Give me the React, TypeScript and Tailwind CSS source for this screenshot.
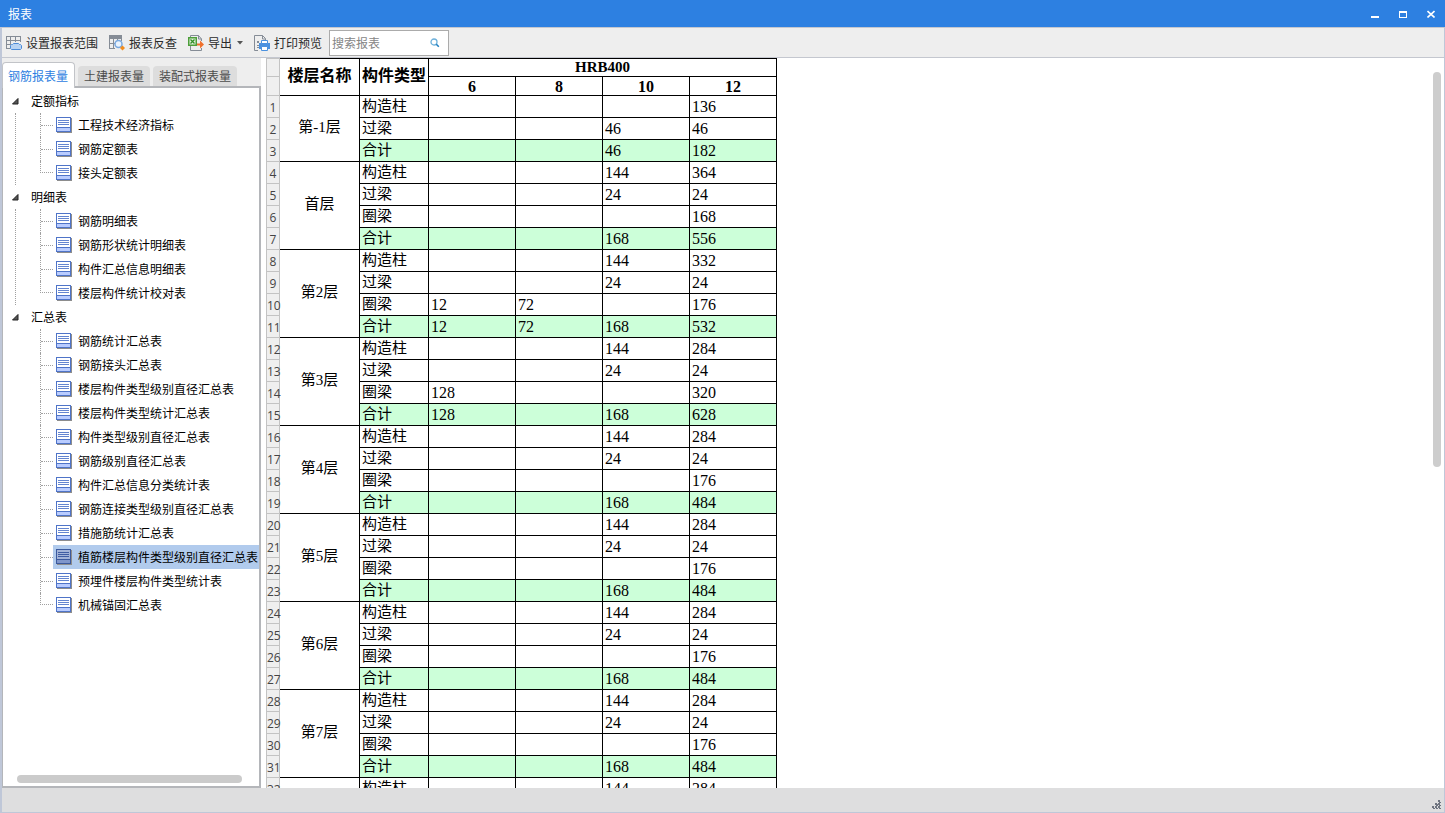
import type { ReactNode } from "react";

type Item = { label: string; selected?: boolean };
type Section = { title: string; items: Item[] };
type Row = { type: string; values: string[] };
type Floor = { name: string; rows: Row[] };

const tabs = ["钢筋报表量", "土建报表量", "装配式报表量"];

const sections: Section[] = [
  {
    title: "定额指标",
    items: [{ label: "工程技术经济指标" }, { label: "钢筋定额表" }, { label: "接头定额表" }],
  },
  {
    title: "明细表",
    items: [
      { label: "钢筋明细表" },
      { label: "钢筋形状统计明细表" },
      { label: "构件汇总信息明细表" },
      { label: "楼层构件统计校对表" },
    ],
  },
  {
    title: "汇总表",
    items: [
      { label: "钢筋统计汇总表" },
      { label: "钢筋接头汇总表" },
      { label: "楼层构件类型级别直径汇总表" },
      { label: "楼层构件类型统计汇总表" },
      { label: "构件类型级别直径汇总表" },
      { label: "钢筋级别直径汇总表" },
      { label: "构件汇总信息分类统计表" },
      { label: "钢筋连接类型级别直径汇总表" },
      { label: "措施筋统计汇总表" },
      { label: "植筋楼层构件类型级别直径汇总表", selected: true },
      { label: "预埋件楼层构件类型统计表" },
      { label: "机械锚固汇总表" },
    ],
  },
];

const standardRows: Row[] = [
  { type: "构造柱", values: ["", "", "144", "284"] },
  { type: "过梁", values: ["", "", "24", "24"] },
  { type: "圈梁", values: ["", "", "", "176"] },
  { type: "合计", values: ["", "", "168", "484"] },
];

const floors: Floor[] = [
  {
    name: "第-1层",
    rows: [
      { type: "构造柱", values: ["", "", "", "136"] },
      { type: "过梁", values: ["", "", "46", "46"] },
      { type: "合计", values: ["", "", "46", "182"] },
    ],
  },
  {
    name: "首层",
    rows: [
      { type: "构造柱", values: ["", "", "144", "364"] },
      { type: "过梁", values: ["", "", "24", "24"] },
      { type: "圈梁", values: ["", "", "", "168"] },
      { type: "合计", values: ["", "", "168", "556"] },
    ],
  },
  {
    name: "第2层",
    rows: [
      { type: "构造柱", values: ["", "", "144", "332"] },
      { type: "过梁", values: ["", "", "24", "24"] },
      { type: "圈梁", values: ["12", "72", "", "176"] },
      { type: "合计", values: ["12", "72", "168", "532"] },
    ],
  },
  {
    name: "第3层",
    rows: [
      { type: "构造柱", values: ["", "", "144", "284"] },
      { type: "过梁", values: ["", "", "24", "24"] },
      { type: "圈梁", values: ["128", "", "", "320"] },
      { type: "合计", values: ["128", "", "168", "628"] },
    ],
  },
  { name: "第4层", rows: standardRows },
  { name: "第5层", rows: standardRows },
  { name: "第6层", rows: standardRows },
  { name: "第7层", rows: standardRows },
  { name: "", rows: standardRows.slice(0, 1) },
];

let counter = 0;
const numberedRows = floors.flatMap((floor) =>
  floor.rows.map((row, i) => ({ ...row, floor, first: i === 0, no: ++counter })),
);

function RangeIcon() {
  return (
    <svg width="16" height="16" viewBox="0 0 16 16" fill="none" aria-hidden="true">
      <path d="M0 1.500h15M0 5.500h15M0 9.500h5M0 13.500h4M.5 1v13M4.500 1v9M9.500 1v6M14.500 1v6" stroke="#858c96" />
      <path d="M7.500 8.500h5l1 1h1l1 1v3l-1 1h-9l-1-1v-3l1-1h1z" fill="#b8d3f2" stroke="#4b8bd8" />
    </svg>
  );
}

function QueryIcon() {
  return (
    <svg width="16" height="16" viewBox="0 0 16 16" fill="none" aria-hidden="true">
      <path d="M0 0h13v4H0z" fill="#858c96" />
      <path d="M.5 3v10.500M0 8.500h6M0 13.500h6M4.500 4v9.500M8.500 4v2M12.500 4v2" stroke="#858c96" />
      <circle cx="9.500" cy="9" r="3.500" fill="#eaf3fd" stroke="#7aa9e0" strokeWidth="1.500" />
      <path d="M13.500 10.500l2.500 2.500-2.500 2.500-2.500-2.500z" fill="#f28c1c" />
    </svg>
  );
}

function ExportIcon() {
  return (
    <svg width="16" height="16" viewBox="0 0 16 16" fill="none" aria-hidden="true">
      <path d="M2.500 2V.500h8L13.500 4v2M10.500.500V4h3M2.500 11v4.500h11V13" stroke="#858c96" />
      <rect x=".75" y="2.750" width="7.500" height="7.500" fill="#e2f0dc" stroke="#4d9e3a" strokeWidth="1.500" />
      <path d="M2.500 4.500l4 4M6.500 4.500l-4 4" stroke="#318e26" strokeWidth="1.300" />
      <path d="M9 8.500h3V5.500l4 4-4 4v-3H9z" fill="#f0702c" />
    </svg>
  );
}

function PrintIcon() {
  return (
    <svg width="16" height="16" viewBox="0 0 16 16" fill="none" aria-hidden="true">
      <path d="M4 15.500H.500V.500h8l3 3V5M8.500.500V4h3" stroke="#858c96" />
      <path d="M3 6h2v2H3zM3 10h2v1H3zM3 12h2v1H3z" fill="#858c96" />
      <path d="M5 8h11v6H5z" fill="#4b91df" />
      <path d="M7.500 5.500h6v3h-6zM7.500 11.500h6v4h-6z" fill="#fff" stroke="#4b91df" />
    </svg>
  );
}

function SearchIcon() {
  return (
    <svg width="10" height="10" viewBox="0 0 10 10" fill="none" aria-hidden="true">
      <circle cx="4" cy="4" r="3" stroke="#6db0da" strokeWidth="1.300" />
      <path d="M6.300 6.300l2.500 2.500" stroke="#1f7fc0" strokeWidth="1.600" />
    </svg>
  );
}

function ReportIcon({ selected }: { selected?: boolean }) {
  return (
    <svg className="shrink-0" width="16" height="16" viewBox="0 0 16 16" shapeRendering="crispEdges" aria-hidden="true">
      <path d="M1 1h15v15H1z" fill="#8d8d8d" />
      <path d="M0 0h15v15H0z" fill={selected ? "#3c5a9e" : "#4f74c8"} />
      <path d="M1 1h13v9H1z" fill={selected ? "#a3b4d8" : "#ffffff"} />
      <path d="M1 11h13v3H1z" fill={selected ? "#7f96cb" : "#b9ccff"} />
      <path d="M2 3h11v1H2zM2 5h11v1H2zM2 7h11v1H2z" fill={selected ? "#3f5da3" : "#6485d0"} />
    </svg>
  );
}

function ToolButton({ icon, children }: { icon: ReactNode; children: ReactNode }) {
  return (
    <button type="button" className="flex items-center gap-1 text-[#2b2b2b]">
      {icon}
      {children}
    </button>
  );
}

function TitleBar() {
  return (
    <header className="flex h-[27px] shrink-0 items-center justify-between bg-[#2d80e1] px-2 text-white">
      <h1>报表</h1>
      <div className="flex gap-4">
        <button type="button" aria-label="最小化" className="flex h-3 w-3 items-center justify-center">
          <svg width="8" height="8" viewBox="0 0 8 8" shapeRendering="crispEdges">
            <path d="M0 6h8v2H0z" fill="#fff" />
          </svg>
        </button>
        <button type="button" aria-label="最大化" className="flex h-3 w-3 items-center justify-center">
          <svg width="8" height="8" viewBox="0 0 8 8" shapeRendering="crispEdges">
            <path fillRule="evenodd" d="M0 1h8v7H0zM1 3v4h6V3z" fill="#fff" />
          </svg>
        </button>
        <button type="button" aria-label="关闭" className="flex h-3 w-3 items-center justify-center">
          <svg width="8" height="8" viewBox="0 0 8 8">
            <path d="M.5 1l7 6.500M7.500 1l-7 6.500" stroke="#fff" strokeWidth="1.600" />
          </svg>
        </button>
      </div>
    </header>
  );
}

function Toolbar() {
  return (
    <div className="flex h-[31px] shrink-0 items-center border-y border-[#c4c7cf] bg-[#eeeeee] pl-1">
      <div className="flex items-center gap-[11px]">
        <ToolButton icon={<RangeIcon />}>设置报表范围</ToolButton>
        <ToolButton icon={<QueryIcon />}>报表反查</ToolButton>
        <ToolButton icon={<ExportIcon />}>
          导出
          <svg className="ml-px" width="6" height="4" viewBox="0 0 6 4" aria-hidden="true">
            <path d="M0 0h6L3 3.500z" fill="#555" />
          </svg>
        </ToolButton>
        <ToolButton icon={<PrintIcon />}>打印预览</ToolButton>
      </div>
      <form className="ml-[7px] flex h-[26px] w-[120px] items-center border border-[#ababab] bg-white pl-0.5 pr-2">
        <input
          type="text"
          aria-label="搜索报表"
          placeholder="搜索报表"
          className="min-w-0 flex-1 outline-none placeholder:text-[#858585]"
        />
        <button type="button" aria-label="搜索">
          <SearchIcon />
        </button>
      </form>
    </div>
  );
}

function TreeSection({ section, last }: { section: Section; last: boolean }) {
  return (
    <li>
      <button type="button" className="flex h-6 items-center gap-3 pl-[9px]">
        <svg width="7" height="7" viewBox="0 0 7 7" aria-hidden="true">
          <path d="M6 .5V6H.5z" fill="#555" stroke="#222" />
        </svg>
        {section.title}
      </button>
      <ul className={last ? "ml-3 border-l border-transparent" : "ml-3 border-l border-dotted border-[#a0a0a0]"}>
        {section.items.map((item, i) => (
          <li key={item.label} className="flex h-6 pl-6">
            <span
              className={
                i === section.items.length - 1
                  ? "h-3 w-[13px] shrink-0 border-b border-l border-dotted border-[#a0a0a0]"
                  : "flex h-6 w-[13px] shrink-0 items-center border-l border-dotted border-[#a0a0a0]"
              }
            >
              {i < section.items.length - 1 && <span className="w-full border-t border-dotted border-[#a0a0a0]" />}
            </span>
            <a
              href="#"
              className={
                item.selected
                  ? "flex flex-1 items-center gap-[6px] whitespace-nowrap bg-[#b1cbed] pl-[3px]"
                  : "flex flex-1 items-center gap-[6px] whitespace-nowrap pl-[3px]"
              }
            >
              <ReportIcon selected={item.selected} />
              {item.label}
            </a>
          </li>
        ))}
      </ul>
    </li>
  );
}

function Sidebar() {
  return (
    <aside className="flex w-[259px] shrink-0 flex-col bg-[#eeeeee]">
      <div role="tablist" className="flex h-7 shrink-0 items-end gap-[3px]">
        {tabs.map((tab, i) => (
          <button
            key={tab}
            type="button"
            role="tab"
            aria-selected={i === 0}
            className={
              i === 0
                ? "relative z-10 -mb-0.5 h-[26px] rounded-t border border-b-0 border-[#c2c4c8] bg-white pl-[5px] pr-[6px] text-[#2d80e1]"
                : "h-5 rounded-t bg-[#dddddd] px-[6px] text-[#4c4c4c]"
            }
          >
            {tab}
          </button>
        ))}
      </div>
      <nav className="flex min-h-0 flex-1 flex-col justify-between overflow-hidden border-2 border-l border-[#b4b6ba] bg-white">
        <ul className="pt-px">
          {sections.map((section, i) => (
            <TreeSection key={section.title} section={section} last={i === sections.length - 1} />
          ))}
        </ul>
        <div className="mb-[3px] ml-[14px] mr-[17px] h-2 rounded-full bg-[#cbcbcb]" />
      </nav>
    </aside>
  );
}

const rowNo =
  "border-b border-x border-[#c3c3c3] bg-[#efefef] p-0 pt-0.5 font-['Open_Sans','Noto_Sans',sans-serif] text-xs leading-4 font-normal text-[#444]";

function ReportTable() {
  return (
    <table className="w-[511px] table-fixed border-separate border-spacing-0 font-['Liberation_Serif','Noto_Sans_CJK_SC',serif] text-[15px] leading-[17px] text-black">
      <colgroup>
        <col className="w-[14px]" />
        <col className="w-20" />
        <col className="w-[69px]" />
        <col className="w-[87px]" />
        <col className="w-[87px]" />
        <col className="w-[87px]" />
        <col className="w-[87px]" />
      </colgroup>
      <thead className="text-base leading-[17px]">
        <tr className="h-[19px]">
          <td className="border border-[#c3c3c3] bg-[#efefef] p-0" />
          <th rowSpan={2} className="border-y border-r border-black p-0 pb-[3px]">楼层名称</th>
          <th rowSpan={2} className="border-y border-r border-black p-0 pb-[3px]">构件类型</th>
          <th colSpan={4} className="border-y border-r border-black p-0 text-[15px]">HRB400</th>
        </tr>
        <tr className="h-[19px]">
          <td className="border-x border-b border-[#c3c3c3] bg-[#efefef] p-0" />
          {["6", "8", "10", "12"].map((d) => (
            <th key={d} className="border-r border-b border-black p-0">{d}</th>
          ))}
        </tr>
      </thead>
      <tbody>
        {numberedRows.map((row) => {
          const total = row.type === "合计";
          const cell = total
            ? "border-r border-b border-black bg-[#ccffd9] p-0 pl-0.5"
            : "border-r border-b border-black p-0 pl-0.5";
          return (
            <tr key={row.no} className="h-[22px]">
              <th scope="row" className={rowNo}>{row.no}</th>
              {row.first && (
                <td rowSpan={row.floor.rows.length} className="border-r border-b border-black p-0 pb-0.5 text-center">
                  {row.floor.name}
                </td>
              )}
              <td className={cell}>{row.type}</td>
              {row.values.map((v, i) => (
                <td key={i} className={cell}>
                  <span className="text-base leading-[17px]">{v}</span>
                </td>
              ))}
            </tr>
          );
        })}
      </tbody>
    </table>
  );
}

export default function App() {
  return (
    <div className="flex h-screen flex-col overflow-hidden bg-white font-['Noto_Sans_CJK_SC',sans-serif] text-xs leading-4 text-black">
      <TitleBar />
      <div className="flex min-h-0 flex-1 flex-col border-r border-b border-l-2 border-[#bfc7d8]">
        <Toolbar />
        <div className="flex min-h-0 flex-1">
          <Sidebar />
          <main className="flex min-w-0 flex-1 items-start justify-between overflow-hidden pl-[5px]">
            <ReportTable />
            <div className="mt-[14px] mr-[3px] h-[395px] w-2 rounded-full bg-[#cdcdcd]" />
          </main>
        </div>
        <footer className="flex h-6 shrink-0 items-end justify-end bg-[#dededf] pr-[3px] pb-[3px]">
          <svg width="9" height="9" viewBox="0 0 9 9" shapeRendering="crispEdges" aria-hidden="true">
            <path d="M6 0h2v2H6zM7 2h2v1H7zM3 3h2v2H3zM5 4h1v1H5zM6 3h2v2H6zM4 5h2v1H4zM7 5h2v1H7zM0 6h2v2H0zM3 6h2v2H3zM6 6h2v2H6zM1 8h2v1H1zM4 8h2v1H4zM7 8h2v1H7z" fill="#6f7480" />
          </svg>
        </footer>
      </div>
    </div>
  );
}
